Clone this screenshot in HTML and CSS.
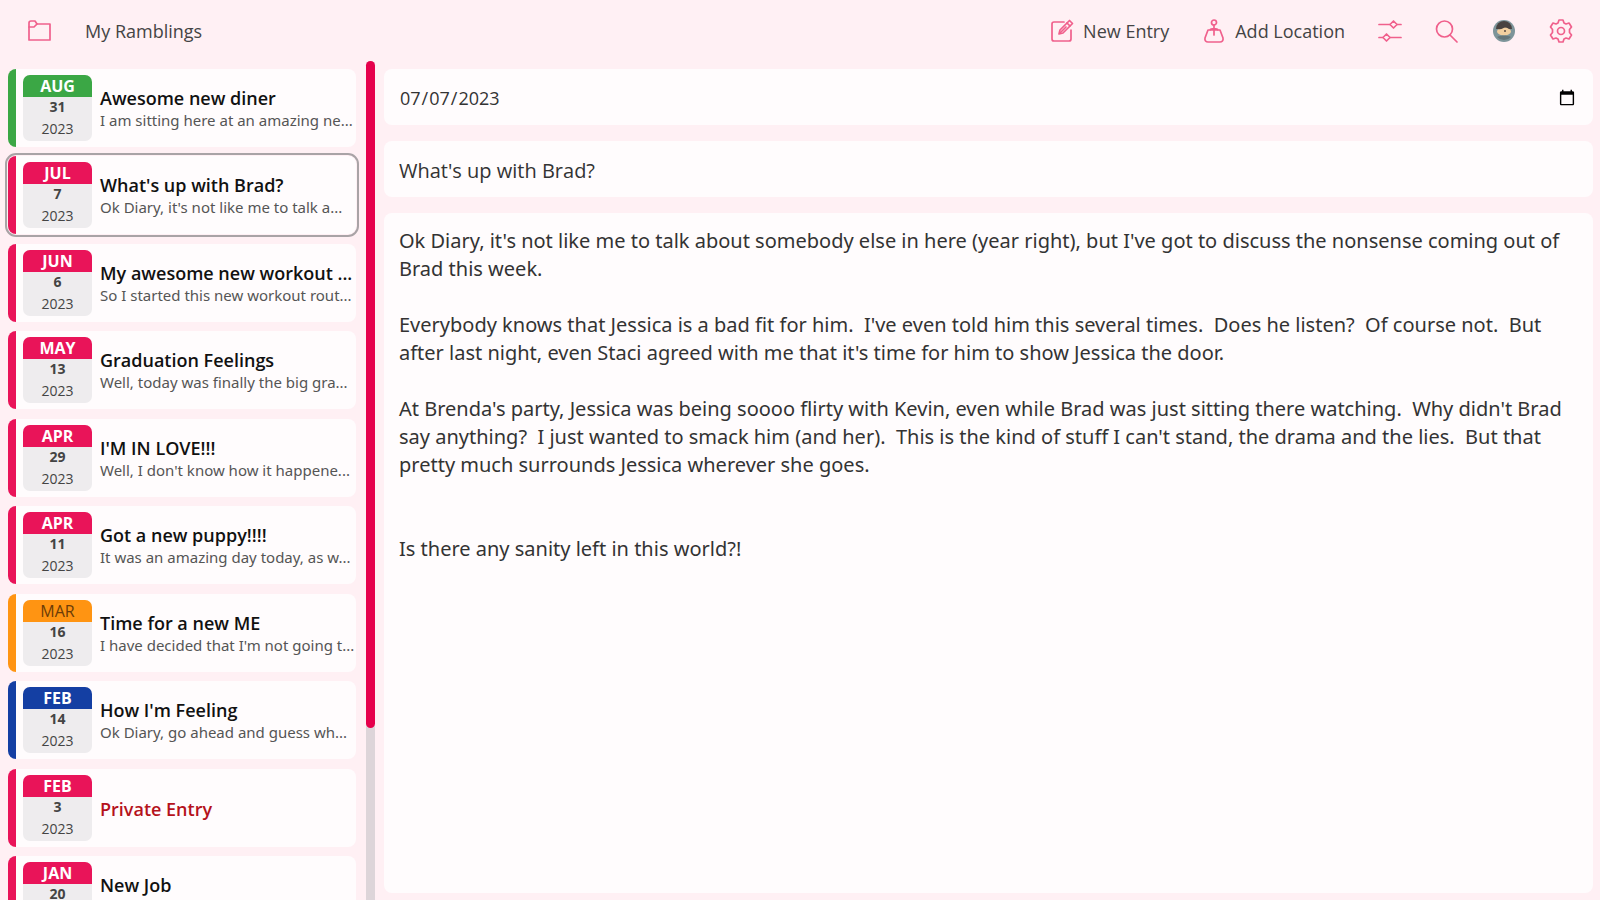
FILE: index.html
```html
<!DOCTYPE html>
<html lang="en">
<head>
    <meta charset="UTF-8">
    <meta name="viewport" content="width=device-width, initial-scale=1.0">
    <title>My Ramblings</title>
    <link rel="stylesheet" href="styles.css">
</head>
<body>

    <header class="toolbar">
        <button class="tool diary">
            <svg class="icon" viewBox="0 0 24 24"><path d="M2 21V4a2 2 0 0 1 2-2h4l2 3h13v16z"/><path d="M2 8h5l3-3"/></svg>
            <span>My Ramblings</span>
        </button>
        <nav class="tools">
            <button class="tool">
                <svg class="icon" viewBox="0 0 24 24"><path d="M14 3H4a2 2 0 0 0-2 2v15a2 2 0 0 0 2 2h15a2 2 0 0 0 2-2V11"/><path d="M9 15l1-4 9.500-9.500 3 3L13 14z"/><path d="M17 4l3 3M10 14l6-6"/></svg>
                <span>New Entry</span>
            </button>
            <button class="tool">
                <svg class="icon" viewBox="0 0 24 24"><circle cx="12" cy="3.500" r="2.500"/><path d="M12 6v10M6 11h12l3 8c.5 2.500-1 4-3 4H6c-2 0-3.500-1.500-3-4zM8 11c1-2 7-2 8 0"/></svg>
                <span>Add Location</span>
            </button>
            <button class="tool" aria-label="Filter">
                <svg class="icon" viewBox="0 0 24 24"><path d="M1 5.500h11M19 5.500h4M1 18.500h4M12 18.500h11"/><path d="M15.500 2l3.500 3.500-3.500 3.500-3.500-3.500zM8.500 15l3.500 3.500-3.500 3.500-3.500-3.500z"/></svg>
            </button>
            <button class="tool" aria-label="Search">
                <svg class="icon" viewBox="0 0 24 24"><circle cx="9.500" cy="10" r="8"/><path d="M15 16l7 7"/></svg>
            </button>
            <button class="tool" aria-label="Profile">
                <svg class="avatar" viewBox="0 0 24 24"><circle cx="12" cy="12" r="11" fill="#7d9499"/><path d="M4 10a8 8 0 0 1 16 0z" fill="#4a4340"/><ellipse cx="12" cy="12.500" rx="7" ry="4" fill="#f3cf9f"/><path d="M6 10c3 1 6-1 8-3 1 2 3 3 5 3a7 7 0 0 0-13 0z" fill="#4a4340"/><circle cx="13" cy="12" r="1" fill="#5a4a42"/><path d="M5 18c4-2 10-2 14 0a9.500 9.500 0 0 1-14 0z" fill="#667579"/></svg>
            </button>
            <button class="tool" aria-label="Settings">
                <svg class="icon" viewBox="0 0 24 24"><path d="M10 1h4l1 3 2 1 3-1 2.500 4-2 2.500v3l2 2.500-2.500 4-3-1-2 1-1 3h-4l-1-3-2-1-3 1-2.500-4 2-2.500v-3l-2-2.500L4 4l3 1 2-1z"/><circle cx="12" cy="12" r="3.500"/></svg>
            </button>
        </nav>
    </header>

    <main class="layout">
        <aside class="sidebar">
            <ul class="entries">
                <li class="entry green">
                    <div class="date"><b class="month">AUG</b><b class="day">31</b><span class="year">2023</span></div>
                    <div class="summary"><h2>Awesome new diner</h2><p>I am sitting here at an amazing ne...</p></div>
                </li>
                <li class="entry selected">
                    <div class="date"><b class="month">JUL</b><b class="day">7</b><span class="year">2023</span></div>
                    <div class="summary"><h2>What's up with Brad?</h2><p>Ok Diary, it's not like me to talk a...</p></div>
                </li>
                <li class="entry">
                    <div class="date"><b class="month">JUN</b><b class="day">6</b><span class="year">2023</span></div>
                    <div class="summary"><h2>My awesome new workout ...</h2><p>So I started this new workout rout...</p></div>
                </li>
                <li class="entry">
                    <div class="date"><b class="month">MAY</b><b class="day">13</b><span class="year">2023</span></div>
                    <div class="summary"><h2>Graduation Feelings</h2><p>Well, today was finally the big gra...</p></div>
                </li>
                <li class="entry">
                    <div class="date"><b class="month">APR</b><b class="day">29</b><span class="year">2023</span></div>
                    <div class="summary"><h2>I'M IN LOVE!!!</h2><p>Well, I don't know how it happene...</p></div>
                </li>
                <li class="entry">
                    <div class="date"><b class="month">APR</b><b class="day">11</b><span class="year">2023</span></div>
                    <div class="summary"><h2>Got a new puppy!!!!</h2><p>It was an amazing day today, as w...</p></div>
                </li>
                <li class="entry orange">
                    <div class="date"><b class="month">MAR</b><b class="day">16</b><span class="year">2023</span></div>
                    <div class="summary"><h2>Time for a new ME</h2><p>I have decided that I'm not going t...</p></div>
                </li>
                <li class="entry blue">
                    <div class="date"><b class="month">FEB</b><b class="day">14</b><span class="year">2023</span></div>
                    <div class="summary"><h2>How I'm Feeling</h2><p>Ok Diary, go ahead and guess wh...</p></div>
                </li>
                <li class="entry private">
                    <div class="date"><b class="month">FEB</b><b class="day">3</b><span class="year">2023</span></div>
                    <div class="summary"><h2>Private Entry</h2></div>
                </li>
                <li class="entry">
                    <div class="date"><b class="month">JAN</b><b class="day">20</b></div>
                    <div class="summary"><h2>New Job</h2><p>&nbsp;</p></div>
                </li>
            </ul>
            <div class="track"><div class="thumb"></div></div>
        </aside>

        <form class="editor">
            <input class="field day-picker" type="date" value="2023-07-07" aria-label="Date">
            <input class="field" type="text" value="What's up with Brad?" aria-label="Title">
            <textarea class="field body" aria-label="Entry" spellcheck="false">Ok Diary, it's not like me to talk about somebody else in here (year right), but I've got to discuss the nonsense coming out of Brad this week.

Everybody knows that Jessica is a bad fit for him.  I've even told him this several times.  Does he listen?  Of course not.  But after last night, even Staci agreed with me that it's time for him to show Jessica the door.

At Brenda's party, Jessica was being soooo flirty with Kevin, even while Brad was just sitting there watching.  Why didn't Brad say anything?  I just wanted to smack him (and her).  This is the kind of stuff I can't stand, the drama and the lies.  But that pretty much surrounds Jessica wherever she goes.


Is there any sanity left in this world?!</textarea>
        </form>
    </main>

</body>
</html>
```
FILE: styles.css
```css
* {
    box-sizing: border-box;
}
body {
    margin: 0;
    height: 100vh;
    display: flex;
    flex-direction: column;
    overflow: hidden;
    background-color: #fff0f4;
    color: #444;
    font-family: "Open Sans", "Noto Sans", sans-serif;
}
button {
    font: inherit;
    color: inherit;
    background: none;
    border: none;
    padding: 0;
    cursor: pointer;
}
.toolbar {
    display: flex;
    justify-content: space-between;
    align-items: center;
    flex: none;
    height: 61px;
    padding: 0 27px;
    font-size: 18px;
}
.tools {
    display: flex;
    gap: 33px;
}
.tool {
    display: flex;
    align-items: center;
    gap: 9px;
}
.diary {
    gap: 34px;
}
.icon {
    width: 24px;
    height: 24px;
    fill: none;
    stroke: #f0608c;
    stroke-width: 1.7;
    stroke-linejoin: round;
    stroke-linecap: round;
}
.avatar {
    width: 24px;
    height: 24px;
}
.layout {
    display: flex;
    flex: 1;
    min-height: 0;
}
.sidebar {
    display: flex;
    flex: none;
    width: 375px;
}
.entries {
    flex: 1;
    min-width: 0;
    margin: 0;
    padding: 8px 10px 0 8px;
    list-style: none;
    overflow: hidden;
}
.entry {
    --accent: #e91459;
    display: flex;
    align-items: center;
    gap: 8px;
    height: 78px;
    margin-bottom: 9px;
    padding-left: 7px;
    border-left: 8px solid var(--accent);
    border-radius: 8px;
    background-color: #fffcfd;
}
/* rows sit on an 87/88 rhythm */
.entry:nth-child(even) {
    margin-bottom: 10px;
}
.green {
    --accent: #3ba745;
}
.orange {
    --accent: #ff9412;
}
.blue {
    --accent: #143fa3;
}
.selected {
    outline: 2px solid #a9a3a6;
    outline-offset: 1px;
}
.date {
    display: flex;
    flex-direction: column;
    flex: none;
    width: 69px;
    height: 66px;
    border-radius: 7px;
    overflow: hidden;
    background-color: #eeecee;
    text-align: center;
    font-size: 14px;
    line-height: 22px;
}
.month {
    background-color: var(--accent);
    color: #fff;
    font-size: 16px;
}
.orange .month {
    color: #6b3c08;
    font-weight: 500;
}
.day {
    line-height: 20px;
}
.year {
    line-height: 24px;
}
.summary {
    min-width: 0;
    padding-top: 2px;
    white-space: nowrap;
}
.summary h2 {
    margin: 0;
    font-size: 18px;
    font-weight: 600;
    line-height: 22px;
    color: #111;
}
.summary p {
    margin: 0;
    font-family: "Noto Sans", sans-serif;
    font-size: 15px;
    line-height: 22px;
    color: #555;
}
.private .summary h2 {
    color: #b5121b;
}
.track {
    width: 9px;
    background-color: #ddd5d9;
    border-radius: 5px 5px 0 0;
}
.thumb {
    height: 79.5%;
    border-radius: 5px;
    background-color: #e6004c;
}
.editor {
    display: flex;
    flex-direction: column;
    flex: 1;
    gap: 16px;
    min-width: 0;
    padding: 8px 7px 7px 9px;
}
.field {
    display: block;
    width: 100%;
    height: 56px;
    margin: 0;
    padding: 2px 15px 0;
    border: none;
    border-radius: 8px;
    outline: none;
    background-color: #fffcfd;
    color: #333;
    font-family: inherit;
    font-size: 20px;
}
.day-picker {
    font-size: 18px;
}
.body {
    flex: 1;
    padding: 14px 15px;
    font-family: "Noto Sans", sans-serif;
    line-height: 28px;
    resize: none;
}
```
